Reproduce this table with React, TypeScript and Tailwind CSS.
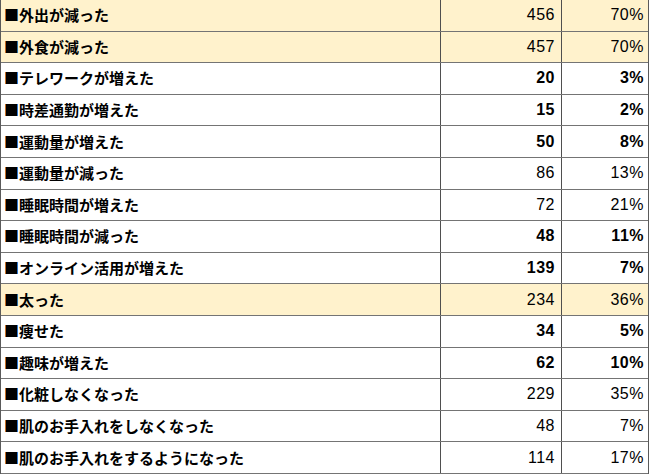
const rows = [
  { label: '外出が減った', count: '456', pct: '70%', hl: true, strong: false },
  { label: '外食が減った', count: '457', pct: '70%', hl: true, strong: false },
  { label: 'テレワークが増えた', count: '20', pct: '3%', hl: false, strong: true },
  { label: '時差通勤が増えた', count: '15', pct: '2%', hl: false, strong: true },
  { label: '運動量が増えた', count: '50', pct: '8%', hl: false, strong: true },
  { label: '運動量が減った', count: '86', pct: '13%', hl: false, strong: false },
  { label: '睡眠時間が増えた', count: '72', pct: '21%', hl: false, strong: false },
  { label: '睡眠時間が減った', count: '48', pct: '11%', hl: false, strong: true },
  { label: 'オンライン活用が増えた', count: '139', pct: '7%', hl: false, strong: true },
  { label: '太った', count: '234', pct: '36%', hl: true, strong: false },
  { label: '痩せた', count: '34', pct: '5%', hl: false, strong: true },
  { label: '趣味が増えた', count: '62', pct: '10%', hl: false, strong: true },
  { label: '化粧しなくなった', count: '229', pct: '35%', hl: false, strong: false },
  { label: '肌のお手入れをしなくなった', count: '48', pct: '7%', hl: false, strong: false },
  { label: '肌のお手入れをするようになった', count: '114', pct: '17%', hl: false, strong: false },
];

export default function App() {
  return (
    <div className="w-[650px] h-[475px] bg-white">
      <div className="w-[649px] h-[474px] flex flex-col border-l border-r border-[#5a5a5a] text-black">
        {rows.map((r) => (
          <div
            key={r.label}
            className={`flex-1 flex border-b border-[#747474] ${r.hl ? 'bg-[#fff2cc]' : 'bg-white'}`}
          >
            <div className="w-[440px] border-r border-[#4f4f4f] flex items-center pl-[3px] pb-[1px] font-['Noto_Sans_CJK_JP',sans-serif] text-[15px] font-bold leading-none">
              ■{r.label}
            </div>
            <div
              className={`w-[121px] border-r border-[#4f4f4f] flex items-center justify-end pr-[6px] font-['Liberation_Sans',Arial,sans-serif] text-[16px] tracking-[0.5px] leading-none ${r.strong ? 'font-bold' : 'font-normal'}`}
            >
              {r.count}
            </div>
            <div
              className={`flex-1 flex items-center justify-end pr-[4px] font-['Liberation_Sans',Arial,sans-serif] text-[16px] tracking-[0.5px] leading-none ${r.strong ? 'font-bold' : 'font-normal'}`}
            >
              {r.pct}
            </div>
          </div>
        ))}
      </div>
    </div>
  );
}
